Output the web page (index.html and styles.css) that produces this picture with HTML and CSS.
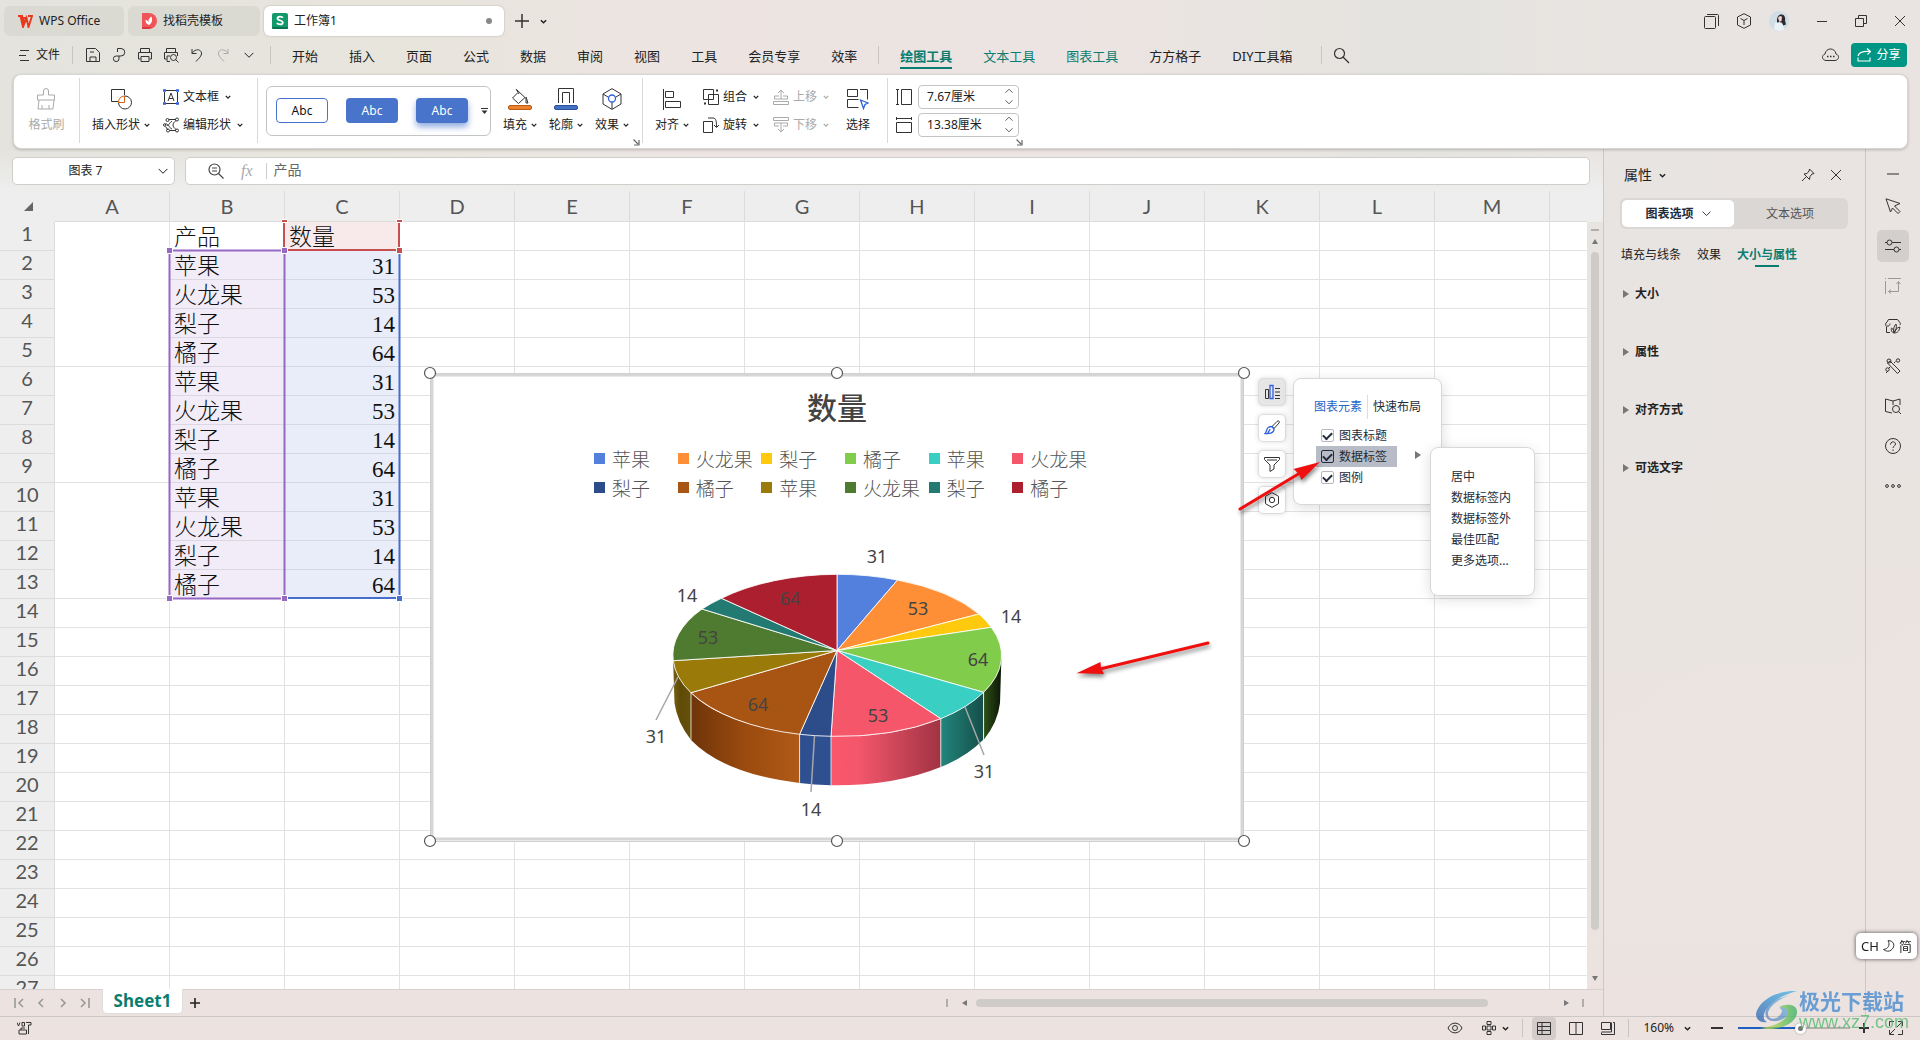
FILE: index.html
```html
<!DOCTYPE html>
<html lang="zh-CN">
<head>
<meta charset="utf-8">
<title>工作簿1 - WPS Office</title>
<link rel="stylesheet" href="styles.css">
</head>
<body>
<svg class="defs" aria-hidden="true">
  <symbol id="caret" viewBox="0 0 8 8"><path d="M1 2.500 4 5.500 7 2.500" fill="none" stroke="currentColor" stroke-width="1.700"/></symbol>
  <symbol id="caret-thin" viewBox="0 0 8 8"><path d="M.5 2.300 4 5.800 7.500 2.300" fill="none" stroke="currentColor" stroke-width=".8"/></symbol>
  <symbol id="tri-right" viewBox="0 0 6 8"><path d="M0 0 6 4 0 8z" fill="currentColor"/></symbol>
  <symbol id="launch" viewBox="0 0 7 7"><path d="M.5 .5 5 5M6 1v5H1" fill="none" stroke="currentColor" stroke-width="1.2"/></symbol>
</svg>

<header class="titlebar">
  <div class="doc-tabs">
    <button class="doc-tab home"><svg width="16" height="13" viewBox="0 0 16 13"><path d="M1 1h4l2 7 2-5H6.500M5 1l-1.500 0 2.500 11 3.500-9 2 9L15 1h-4" fill="none" stroke="#e8391f" stroke-width="1.900"/></svg>WPS Office</button>
    <button class="doc-tab docer"><svg width="16" height="16" viewBox="0 0 16 16"><path d="M1 0h7a8 8 0 0 1 0 16H1z" fill="#f0555a"/><path d="M1 14h10l-3 2H1z" fill="#d83a40"/><path d="M8 12C5 11 4.500 9 4.500 7c2 0 3 1.500 3 3C7 7 8 5 10.500 3.500 11.500 7 11.500 10 8 12z" fill="#fff"/></svg>找稻壳模板</button>
    <button class="doc-tab active"><svg width="16" height="16" viewBox="0 0 16 16"><rect width="16" height="16" rx="2" fill="#11996b"/><path d="M0 14h16v1a1 1 0 0 1-1 1H1a1 1 0 0 1-1-1z" fill="#0b7350"/><path d="M10.800 4.700C10 3.300 5.500 3 5.500 5.500c0 2.500 5.300 1.500 5.300 4 0 2.700-5 2.300-5.800.4" fill="none" stroke="#fff" stroke-width="1.800"/></svg>工作簿1<i class="dot"></i></button>
    <button class="plain" aria-label="新建"><svg width="14" height="14" viewBox="0 0 14 14"><path d="M7 0v14M0 7h14" stroke="#333" stroke-width="1.500"/></svg></button>
    <button class="plain" aria-label="标签列表"><svg width="7" height="7"><use href="#caret"/></svg></button>
  </div>
  <div class="window-tools">
    <button class="plain"><svg width="15" height="15" viewBox="0 0 15 15" fill="none" stroke="#333"><rect x=".5" y="2.500" width="11" height="12" rx="1"/><path d="M3 .5h10.500a1 1 0 0 1 1 1V12"/></svg></button>
    <button class="plain"><svg width="16" height="16" viewBox="0 0 16 16" fill="none" stroke="#333"><path d="M8 .7 14.500 4v8L8 15.300 1.500 12V4zM4.500 5.500 8 7.500l3.500-2M8 7.500V12"/></svg></button>
    <button class="plain"><svg width="20" height="20" viewBox="0 0 20 20"><circle cx="10" cy="10" r="10" fill="#cfdde4"/><path d="M8 8c1-4 3-5 5-4.500 3 .5 3.500 4 3 6l1 4-3 1-1-3-4 1-1-1z" fill="#2c2730"/><path d="M9 7c1-2 3-3 4-1l-.5 4-2 1z" fill="#f1d3c9"/><path d="M6 12l5-1 3 3 1 5a10 10 0 0 1-10-1z" fill="#e9f2f7"/></svg></button>
    <button class="plain win"><svg width="12" height="12" viewBox="0 0 12 12"><path d="M1 6.500h10" stroke="#333"/></svg></button>
    <button class="plain win"><svg width="12" height="12" viewBox="0 0 12 12" fill="none" stroke="#333"><path d="M.5 3.500h8v8h-8zM3.500 3.500v-3h8v8h-3"/></svg></button>
    <button class="plain win"><svg width="12" height="12" viewBox="0 0 12 12"><path d="M1 1l10 10M11 1 1 11" stroke="#333"/></svg></button>
  </div>
</header>

<nav class="menubar">
  <button class="plain file"><svg width="10" height="12" viewBox="0 0 10 12"><path d="M1 1.500h9M0 6.500h7M1 11.500h9" stroke="#333"/></svg>文件</button>
  <i class="sep"></i>
  <div class="quick">
    <button class="plain"><svg width="16" height="16" viewBox="0 0 16 16" fill="none" stroke="#333"><path d="M1.500 1.500h9l4 4v9h-13zM5 14.500V10h6v4.500M5 5h4"/></svg></button>
    <button class="plain"><svg width="16" height="16" viewBox="0 0 16 16" fill="none" stroke="#333"><path d="M6.500 5V1.500h3.500a3.500 3.500 0 0 1 0 7.500H5.500a2.800 2.800 0 1 0 2.500 2.800V9"/></svg></button>
    <button class="plain"><svg width="16" height="16" viewBox="0 0 16 16" fill="none" stroke="#333"><path d="M3.500 5V1.500h9V5M3.500 12h-2V5.500h13V12h-2M4 9.500h8v5H4z"/></svg></button>
    <button class="plain"><svg width="16" height="16" viewBox="0 0 16 16" fill="none" stroke="#333"><path d="M3.500 5V1.500h9V5M3.500 12h-2V5.500h13V9M7 14.500H4V9h3"/><circle cx="10.500" cy="10.500" r="3"/><path d="M12.500 12.500l3 3"/></svg></button>
    <button class="plain"><svg width="16" height="16" viewBox="0 0 16 16" fill="none" stroke="#333"><path d="M3 2v4.500h4.500M3 6.500C6 1 13 2 12.500 7 12 10 9 12 7 14.500"/></svg></button>
    <button class="plain"><svg width="16" height="16" viewBox="0 0 16 16" fill="none" stroke="#aaa"><path d="M13 2v4.500H8.500M13 6.500C10 1 3 2 3.500 7 4 10 7 12 9 14.500"/></svg></button>
    <button class="plain"><svg width="10" height="10"><use href="#caret-thin"/></svg></button>
  </div>
  <i class="sep"></i>
  <div class="menus">
    <a href="#">开始</a><a href="#">插入</a><a href="#">页面</a><a href="#">公式</a><a href="#">数据</a><a href="#">审阅</a><a href="#">视图</a><a href="#">工具</a><a href="#">会员专享</a><a href="#">效率</a>
  </div>
  <i class="sep"></i>
  <div class="menus">
    <a href="#" class="current">绘图工具</a><a href="#" class="context">文本工具</a><a href="#" class="context">图表工具</a><a href="#">方方格子</a><a href="#">DIY工具箱</a>
  </div>
  <i class="sep last"></i>
  <button class="plain"><svg width="17" height="17" viewBox="0 0 17 17" fill="none" stroke="#333" stroke-width="1.200"><circle cx="6.500" cy="6.500" r="5"/><path d="M10 10l6 6"/></svg></button>
  <button class="plain cloud"><svg width="17" height="14" viewBox="0 0 17 14" fill="none" stroke="#333"><path d="M4 12.500C-.5 12-.5 7 3 6 4-.7 13-.7 14 6c3.500 1 3.500 6-1 6.500z"/><path d="M5 8.500h1.500M8 8.500h1.500M11 8.500h1.500" stroke-width="1.500"/></svg></button>
  <button class="share"><svg width="15" height="14" viewBox="0 0 15 14" fill="none" stroke="#fff" stroke-width="1.100"><path d="M1 8C2 4 6 3 13 3.500M10 .5l3.500 3-3 3M1 9.500v3.500h12V9.500"/></svg>分享</button>
</nav>

<section class="ribbon">
  <div class="group g-format">
    <button class="big off"><svg width="20" height="22" viewBox="0 0 20 22" fill="none" stroke="#aaa"><path d="M7.500 7V3a2.500 2.500 0 0 1 5 0v4h6v5h-17V7zM3 12l-1 9h15l1-9M6 21v-4M13 21v-4"/></svg><span>格式刷</span></button>
  </div>
  <div class="group g-insert">
    <button class="big"><svg width="22" height="22" viewBox="0 0 22 22" fill="none" stroke="#333"><path d="M8 13.500H1.500v-12h13V7"/><path d="M14.500 8a6.500 6.500 0 1 1-6 6.500"/><path d="M8.500 14.500a6 6 0 0 1 6-6.500v6.500z" stroke="#d2601a"/></svg><span>插入形状<svg width="6" height="6"><use href="#caret"/></svg></span></button>
    <div class="stack">
      <button class="small"><svg width="16" height="16" viewBox="0 0 16 16" fill="none" stroke="#333"><path d="M1.500 3v10M14.500 3v10M3 1.500h10M3 14.500h10M5 12l3-8 3 8M6 9.500h4"/><path d="M0 1.500h3M13 1.500h3M0 14.500h3M13 14.500h3" stroke="#2f5fe0" stroke-width="2.500"/></svg>文本框<svg width="6" height="6"><use href="#caret"/></svg></button>
      <button class="small"><svg width="16" height="16" viewBox="0 0 16 16" fill="none" stroke="#333"><path d="M6 2.500h7M3.500 6.500 2 7.500M2.500 9.500 5 13M6.500 13.500H13M13 3.500c-4 3-4 6 0 9M9 4C5 7 7 8 4 8c3 0 1 2 5 4"/><circle cx="4.500" cy="3" r="1.500"/><circle cx="14" cy="2.500" r="1.500"/><circle cx="1.800" cy="8" r="1.300"/><circle cx="5" cy="13.500" r="1.500"/><circle cx="14" cy="13.500" r="1.500"/></svg>编辑形状<svg width="6" height="6"><use href="#caret"/></svg></button>
    </div>
  </div>
  <div class="group g-style">
    <div class="gallery">
      <button class="swatch outline">Abc</button><button class="swatch">Abc</button><button class="swatch shadow">Abc</button>
      <button class="plain more"><svg width="7" height="6" viewBox="0 0 7 6"><path d="M0 .5h7" stroke="#333"/><path d="M.5 2.500h6L3.500 6z" fill="#333"/></svg></button>
    </div>
    <button class="big"><svg width="24" height="22" viewBox="0 0 24 22"><path d="M9 2 17 9.500 10.500 15.500 4.500 10 9.500 5M8 1l3 5M18 9l2 6h-2z" fill="none" stroke="#333"/><rect x=".5" y="17.500" width="23" height="4" rx="1.500" fill="#ee8130" stroke="#b85c15"/></svg><span>填充<svg width="6" height="6"><use href="#caret"/></svg></span></button>
    <button class="big"><svg width="24" height="22" viewBox="0 0 24 22"><path d="M4.500 15V.5h15V15M8.500 15V4.500h7V15" fill="none" stroke="#333"/><rect x=".5" y="17.500" width="23" height="4" rx="1.500" fill="#4472c4" stroke="#2c519b"/></svg><span>轮廓<svg width="6" height="6"><use href="#caret"/></svg></span></button>
    <button class="big"><svg width="20" height="22" viewBox="0 0 20 22" fill="none" stroke="#333"><path d="M10 .6 19 6v10l-9 5.400L1 16V6zM1 6l5 3M19 6l-5 3M10 14v7"/><circle cx="10" cy="10.500" r="3.500" stroke="#2f5fe0" stroke-width="1.300"/></svg><span>效果<svg width="6" height="6"><use href="#caret"/></svg></span></button>
    <svg class="launcher" width="7" height="7"><use href="#launch"/></svg>
  </div>
  <div class="group g-arrange">
    <button class="big"><svg width="20" height="22" viewBox="0 0 20 22" fill="none" stroke="#333"><path d="M1.500 1v21M3.500 3.500h8v6h-8zM3.500 13.500h15v6h-15z"/></svg><span>对齐<svg width="6" height="6"><use href="#caret"/></svg></span></button>
    <div class="stack">
      <button class="small"><svg width="16" height="16" viewBox="0 0 16 16" fill="none" stroke="#333"><path d="M.5.500h10v10H.5zM5.500 5.500h10v10h-10z"/><path d="M13 1.500h2M1 14.500h2" stroke-width="2"/></svg>组合<svg width="6" height="6"><use href="#caret"/></svg></button>
      <button class="small"><svg width="16" height="16" viewBox="0 0 16 16" fill="none" stroke="#333"><path d="M.5 4.500h9v11h-9zM5 1h5c3 0 3.500 3 3.500 9M11 8l2.500 2.500L16 8"/></svg>旋转<svg width="6" height="6"><use href="#caret"/></svg></button>
    </div>
    <div class="stack">
      <button class="small off"><svg width="16" height="16" viewBox="0 0 16 16" fill="none" stroke="#aaa"><path d="M.5 12.500h15v3H.5zM6 10H1.500V7H6M10 10h4.500V7H10M8 10V1M5 4l3-3 3 3M6 10h4"/></svg>上移<svg width="6" height="6"><use href="#caret"/></svg></button>
      <button class="small off"><svg width="16" height="16" viewBox="0 0 16 16" fill="none" stroke="#aaa"><path d="M.5.500h15v3H.5zM6 6H1.500v3H6M10 6h4.500v3H10M8 6v9M5 12l3 3 3-3M6 6h4"/></svg>下移<svg width="6" height="6"><use href="#caret"/></svg></button>
    </div>
    <button class="big pick"><svg width="22" height="22" viewBox="0 0 22 22" fill="none" stroke="#333"><path d="M.5 8.500v-7h10v7zM13 1.500h7.500v10M.5 11.500h11M.5 11.500v8h11"/><path d="M13.500 12 21 15l-3 1.500-1.500 4z" stroke="#2f5fe0" stroke-width="1.300"/></svg><span>选择</span></button>
  </div>
  <div class="group g-size">
    <div class="stack sizes">
      <label><svg width="16" height="16" viewBox="0 0 16 16" fill="none" stroke="#333"><path d="M0 .5h3M0 15.500h3M1.500.500v15M5.500.500h10v15h-10z"/></svg><span class="spin"><input value="7.67厘米" aria-label="高度"><span class="arrows"><svg class="up" width="8" height="8"><use href="#caret-thin"/></svg><svg width="8" height="8"><use href="#caret-thin"/></svg></span></span></label>
      <label><svg width="16" height="16" viewBox="0 0 16 16" fill="none" stroke="#333"><path d="M.5 0v3M15.500 0v3M.5 1.500h15M.5 5.500h15v10H.5z"/></svg><span class="spin"><input value="13.38厘米" aria-label="宽度"><span class="arrows"><svg class="up" width="8" height="8"><use href="#caret-thin"/></svg><svg width="8" height="8"><use href="#caret-thin"/></svg></span></span></label>
    </div>
    <svg class="launcher" width="7" height="7"><use href="#launch"/></svg>
  </div>
</section>

<main class="workspace">
  <section class="book">
    <div class="formula-row">
      <button class="namebox"><span>图表 7</span><svg width="10" height="10"><use href="#caret-thin"/></svg></button>
      <div class="formula">
        <svg width="16" height="16" viewBox="0 0 16 16" fill="none" stroke="#444" stroke-width="1.200"><circle cx="6.500" cy="6.500" r="5.500"/><path d="M10.500 10.500l5 5M4 5h5M4 8h5"/></svg>
        <span class="fx">fx</span><i></i>
        <input value="产品" aria-label="编辑栏">
      </div>
    </div>
    <div class="sheet">
      <div class="grid">
        <table>
          <colgroup><col class="c-head"><col><col><col><col><col><col><col><col><col><col><col><col><col><col></colgroup>
          <thead><tr><th class="corner"><svg width="9" height="9" viewBox="0 0 9 9"><path d="M9 0v9H0z" fill="#666"/></svg></th><th>A</th><th>B</th><th>C</th><th>D</th><th>E</th><th>F</th><th>G</th><th>H</th><th>I</th><th>J</th><th>K</th><th>L</th><th>M</th><th></th></tr></thead>
          <tbody>
            <tr><th>1<td rowspan="5"><td>产品<td class="series">数量<td><td><td><td><td><td><td><td><td><td><td></tr>
            <tr><th>2<td class="cat">苹果<td class="val">31<td><td><td><td><td><td><td><td><td><td><td></tr>
            <tr><th>3<td class="cat">火龙果<td class="val">53<td><td><td><td><td><td><td><td><td><td><td></tr>
            <tr><th>4<td class="cat">梨子<td class="val">14<td><td><td><td><td><td><td><td><td><td><td></tr>
            <tr><th>5<td class="cat">橘子<td class="val">64<td><td><td><td><td><td><td><td><td><td><td></tr>
            <tr><th>6<td rowspan="4"><td class="cat">苹果<td class="val">31<td><td><td><td><td><td><td><td><td><td><td></tr>
            <tr><th>7<td class="cat">火龙果<td class="val">53<td><td><td><td><td><td><td><td><td><td><td></tr>
            <tr><th>8<td class="cat">梨子<td class="val">14<td><td><td><td><td><td><td><td><td><td><td></tr>
            <tr><th>9<td class="cat">橘子<td class="val">64<td><td><td><td><td><td><td><td><td><td><td></tr>
            <tr><th>10<td rowspan="4"><td class="cat">苹果<td class="val">31<td><td><td><td><td><td><td><td><td><td><td></tr>
            <tr><th>11<td class="cat">火龙果<td class="val">53<td><td><td><td><td><td><td><td><td><td><td></tr>
            <tr><th>12<td class="cat">梨子<td class="val">14<td><td><td><td><td><td><td><td><td><td><td></tr>
            <tr><th>13<td class="cat">橘子<td class="val">64<td><td><td><td><td><td><td><td><td><td><td></tr>
            <tr><th>14<td><td><td><td><td><td><td><td><td><td><td><td><td><td></tr>
            <tr><th>15<td><td><td><td><td><td><td><td><td><td><td><td><td><td></tr>
            <tr><th>16<td><td><td><td><td><td><td><td><td><td><td><td><td><td></tr>
            <tr><th>17<td><td><td><td><td><td><td><td><td><td><td><td><td><td></tr>
            <tr><th>18<td><td><td><td><td><td><td><td><td><td><td><td><td><td></tr>
            <tr><th>19<td><td><td><td><td><td><td><td><td><td><td><td><td><td></tr>
            <tr><th>20<td><td><td><td><td><td><td><td><td><td><td><td><td><td></tr>
            <tr><th>21<td><td><td><td><td><td><td><td><td><td><td><td><td><td></tr>
            <tr><th>22<td><td><td><td><td><td><td><td><td><td><td><td><td><td></tr>
            <tr><th>23<td><td><td><td><td><td><td><td><td><td><td><td><td><td></tr>
            <tr><th>24<td><td><td><td><td><td><td><td><td><td><td><td><td><td></tr>
            <tr><th>25<td><td><td><td><td><td><td><td><td><td><td><td><td><td></tr>
            <tr><th>26<td><td><td><td><td><td><td><td><td><td><td><td><td><td></tr>
            <tr><th>27<td><td><td><td><td><td><td><td><td><td><td><td><td><td></tr>
          </tbody>
        </table>

        <svg class="ranges" width="240" height="390" viewBox="165 216 240 390" fill="none" stroke-width="2">
          <path d="M284 222v28h115v-28" stroke="#c5504f"/>
          <path d="M399.500 250v348H284" stroke="#456fcf"/>
          <path d="M169.500 250.500h115v348h-115z" stroke="#9668c4"/>
          <g stroke="#fff" stroke-width="1">
            <path d="M281.500 219.500h6v3h-6zM396.500 219.500h6v3h-6zM396.500 247.500h6v6h-6z" fill="#c5504f"/>
            <path d="M396.500 595.500h6v6h-6z" fill="#456fcf"/>
            <path d="M166.500 247.500h6v6h-6zM281.500 247.500h6v6h-6zM166.500 595.500h6v6h-6zM281.500 595.500h6v6h-6z" fill="#9668c4"/>
          </g>
        </svg>

        <figure class="chart">
          <figcaption>数量</figcaption>
          <ul class="legend">
            <li class="k1">苹果<li class="k2">火龙果<li class="k3">梨子<li class="k4">橘子<li class="k5">苹果<li class="k6">火龙果
            <li class="k7">梨子<li class="k8">橘子<li class="k9">苹果<li class="k10">火龙果<li class="k11">梨子<li class="k12">橘子
          </ul>
          <svg class="plot" viewBox="422 365 830 484" width="830" height="484">
            <defs>
              <linearGradient id="s4"><stop offset="0" stop-color="#2f5218"/><stop offset="1" stop-color="#0c1606"/></linearGradient>
              <linearGradient id="s5"><stop offset="0" stop-color="#22867d"/><stop offset="1" stop-color="#154f4a"/></linearGradient>
              <linearGradient id="s6"><stop offset="0" stop-color="#f9576c"/><stop offset=".25" stop-color="#f4566b"/><stop offset="1" stop-color="#a03343"/></linearGradient>
              <linearGradient id="s8"><stop offset="0" stop-color="#6f340a"/><stop offset=".5" stop-color="#9b4b0e"/><stop offset="1" stop-color="#b05a18"/></linearGradient>
              <linearGradient id="s9"><stop offset="0" stop-color="#7a6212"/><stop offset=".4" stop-color="#5f4b08"/><stop offset="1" stop-color="#66510a"/></linearGradient>
            </defs>
            <g fill="none">
              <path d="M432 375h810v464H432z" stroke="#d6d6d6" stroke-width="3"/>
              <path d="M430.500 373.500h813v468h-813z" stroke="#d0d0d0"/>
            </g>
            <path d="M673 658 674.500 703Q677 722 691 740V693Q676 676 673 658z" fill="url(#s9)"/>
            <path d="M691 693V740Q724 774 799.600 783V734Q722 724 691 693z" fill="url(#s8)"/>
            <path d="M799.600 734V783Q814 785 831 785.300V736z" fill="#2f5090"/>
            <path d="M831 736V785.300Q894 786 940.800 767V718.700Q894 738 831 736z" fill="url(#s6)"/>
            <path d="M940.800 718.700V767Q966 757 983 740V692.300Q966 709 940.800 718.700z" fill="url(#s5)"/>
            <path d="M983.600 692.300V740Q998 722 1000 703L1001.500 655Q1000 676 983.600 692.300z" fill="url(#s4)"/>
            <path d="M691 693v47M799.600 734v49M831 736v49M940.800 719v48M983.600 692v48" stroke="#ffffffc0" fill="none"/>
            <g stroke="#fff" stroke-opacity=".85" stroke-linejoin="round">
              <path d="M837 650.500V574.300A164.500 81 0 0 1 897.500 580z" fill="#5380dc"/>
              <path d="M837 650.500 897.500 580A164.500 81 0 0 1 979 614z" fill="#ff8f37"/>
              <path d="M837 650.500 979 614A164.500 81 0 0 1 991.300 627.300z" fill="#ffc90d"/>
              <path d="M837 650.500 991.300 627.300A164.500 81 0 0 1 983.600 692.300z" fill="#82cc4b"/>
              <path d="M837 650.500 983.600 692.300A164.500 81 0 0 1 940.800 718.700z" fill="#39cfc2"/>
              <path d="M837 650.500 940.800 718.700A164.500 81 0 0 1 831 736.300z" fill="#f5566a"/>
              <path d="M837 650.500 831 736.300A164.500 81 0 0 1 799.600 734.300z" fill="#2c4c8a"/>
              <path d="M837 650.500 799.600 734.300A164.500 81 0 0 1 690.900 692.700z" fill="#a85513"/>
              <path d="M837 650.500 690.900 692.700A164.500 81 0 0 1 673.300 660.700z" fill="#9a7a08"/>
              <path d="M837 650.500 673.300 660.700A164.500 81 0 0 1 702 609z" fill="#4f7b30"/>
              <path d="M837 650.500 702 609A164.500 81 0 0 1 721.500 598.300z" fill="#237a72"/>
              <path d="M837 650.500 721.500 598.300A164.500 81 0 0 1 837 574.300z" fill="#ab1f2e"/>
            </g>
            <path d="M678 677 656 720M814.500 736 811 792M965 707 984 755" stroke="#a6a6a6" stroke-width="1.500"/>
            <g class="labels">
              <text x="877" y="563">31</text><text x="918" y="615">53</text><text x="1011" y="623">14</text><text x="978" y="666">64</text>
              <text x="984" y="778">31</text><text x="878" y="722">53</text><text x="811" y="816">14</text><text x="758" y="711">64</text>
              <text x="656" y="743">31</text><text x="708" y="644">53</text><text x="687" y="602">14</text><text x="790" y="605">64</text>
            </g>
            <g fill="#fff" stroke="#555" stroke-width="1.200">
              <circle cx="430" cy="373" r="5.500"/><circle cx="837" cy="373" r="5.500"/><circle cx="1244" cy="373" r="5.500"/>
              <circle cx="430" cy="841" r="5.500"/><circle cx="837" cy="841" r="5.500"/><circle cx="1244" cy="841" r="5.500"/>
            </g>
          </svg>
        </figure>

        <div class="chart-tools">
          <button class="on"><svg width="16" height="16" viewBox="0 0 16 16" fill="none" stroke="#333"><path d="M1.500 5.500h3v9h-3zM11 4.500h5M11 8h5M11 11.500h5M11 14.500h5"/><path d="M6 1.500h3v13H6z" stroke="#2f5fe0" stroke-width="1.300"/></svg></button>
          <button><svg width="16" height="16" viewBox="0 0 16 16" fill="none" stroke="#333"><path d="M8 6.500 13 1.500c2-1.500 3 .5 2 1.500l-5 5.500z"/><path d="M8 6.500 10 9c0 4-4 5-9 4.500C3 12 2 8 5 7zM4 13c0-2 2-2 2-4" stroke="#2f5fe0" stroke-width="1.300"/></svg></button>
          <button><svg width="16" height="16" viewBox="0 0 16 16" fill="none" stroke="#333"><path d="M.5 1.500h15v2L10 9v4l-4 2.500V9L.5 3.500zM3 4h10"/></svg></button>
          <button><svg width="16" height="16" viewBox="0 0 16 16" fill="none" stroke="#333"><path d="M8 .6 14.500 4.300v7.400L8 15.400 1.500 11.700V4.300z"/><circle cx="8" cy="8" r="2.700"/></svg></button>
        </div>

        <div class="popup elements">
          <div class="popup-tabs"><button class="plain sel">图表元素</button><button class="plain">快速布局</button></div>
          <label><input type="checkbox" checked>图表标题</label>
          <label class="hover"><input type="checkbox" checked>数据标签</label>
          <label><input type="checkbox" checked>图例</label>
          <svg class="flyout" width="6" height="8"><use href="#tri-right"/></svg>
        </div>
        <div class="popup positions">
          <button>居中</button><button>数据标签内</button><button>数据标签外</button><button>最佳匹配</button><button>更多选项...</button>
        </div>

        <svg class="pointers" width="260" height="240" viewBox="1070 450 260 240">
          <path d="M1240 509 1300 473" stroke="#f00f0f" stroke-width="3" stroke-linecap="round"/><path d="M1320 462 1293.500 469 1299 474 1301.500 480z" fill="#f00f0f"/>
          <path d="M1208 643 1100 669" stroke="#f00f0f" stroke-width="3" stroke-linecap="round"/><path d="M1076.500 673.300 1100.500 662 1101 668 1104 674z" fill="#f00f0f"/>
        </svg>
      </div>
      <div class="vscroll"><i class="split"></i><i class="tri up"></i><i class="thumb"></i><i class="tri down"></i></div>
    </div>
    <div class="sheet-tabs">
      <div class="tab-nav">
        <button class="plain"><svg width="10" height="10" viewBox="0 0 10 10"><path d="M1 0v10M9 1 5 5l4 4"/></svg></button>
        <button class="plain"><svg width="10" height="10" viewBox="0 0 10 10"><path d="M7 1 3 5l4 4"/></svg></button>
        <button class="plain"><svg width="10" height="10" viewBox="0 0 10 10"><path d="M3 1l4 4-4 4"/></svg></button>
        <button class="plain"><svg width="10" height="10" viewBox="0 0 10 10"><path d="M9 0v10M1 1l4 4-4 4"/></svg></button>
      </div>
      <button class="sheet-tab">Sheet1</button>
      <button class="plain add"><svg width="10" height="10" viewBox="0 0 10 10"><path d="M5 0v10M0 5h10" stroke="#222" stroke-width="1.600"/></svg></button>
      <div class="hscroll"><i class="split"></i><i class="tri left"></i><i class="track"><i class="thumb"></i></i><i class="tri right"></i><i class="split"></i></div>
    </div>
  </section>

  <aside class="panel">
    <div class="panel-head"><span>属性</span><svg width="7" height="7"><use href="#caret"/></svg>
      <button class="plain pin"><svg width="14" height="14" viewBox="0 0 14 14" fill="none" stroke="#333"><path d="M8.500 1 13 5.500l-2 .5-2 2.500-.5 3L3 6l3-.5L8 3zM5.500 8.500 1 13"/></svg></button>
      <button class="plain"><svg width="12" height="12" viewBox="0 0 12 12"><path d="M1 1l10 10M11 1 1 11" stroke="#333"/></svg></button>
    </div>
    <div class="segments"><button class="sel">图表选项<svg width="9" height="9"><use href="#caret-thin"/></svg></button><button>文本选项</button></div>
    <div class="panel-tabs"><a href="#">填充与线条</a><a href="#">效果</a><a href="#" class="sel">大小与属性</a></div>
    <div class="sections">
      <button><svg width="6" height="8"><use href="#tri-right"/></svg>大小</button>
      <button><svg width="6" height="8"><use href="#tri-right"/></svg>属性</button>
      <button><svg width="6" height="8"><use href="#tri-right"/></svg>对齐方式</button>
      <button><svg width="6" height="8"><use href="#tri-right"/></svg>可选文字</button>
    </div>
  </aside>

  <nav class="sidebar">
    <button class="short"><svg width="16" height="16" viewBox="0 0 16 16"><path d="M2 8h12" stroke="#888" stroke-width="2"/></svg></button>
    <button><svg width="16" height="16" viewBox="0 0 16 16" fill="none" stroke="#333"><path d="M1 .8 15 5.500 9.500 8l5.500 5.500-2 2L7.500 10 5.500 14z"/></svg></button>
    <button class="on"><svg width="16" height="16" viewBox="0 0 16 16" fill="none" stroke="#333"><circle cx="4.500" cy="4.500" r="2.500"/><circle cx="11.500" cy="11.500" r="2.500"/><path d="M0 4.500h2M7 4.500h9M0 11.500h9M14 11.500h2"/></svg></button>
    <button><svg width="16" height="16" viewBox="0 0 16 16" fill="none" stroke="#999"><path d="M0 .500h1M3 .500h13M.5 3v13M13.500 4v9.500H4M11.500 6l2-2.500 2 2.500M6 11.500l-2.500 2 2.500 2"/></svg></button>
    <button><svg width="16" height="16" viewBox="0 0 16 16" fill="none" stroke="#333"><path d="M5 14.500H1.500v-6C0 7 .5 5 2 4l1.500-2.500h9L14.500 4c1 1 1 2 .5 3M2 8c2 .5 3-1 3-2.500"/><path d="M9 15C6 14 6 11.500 6.500 10 8.500 11 9 13 9 15c-1-4 0-7 2-9 1 3 0 7-2 9 2 0 5-.5 6-6-3 .5-5 3-6 6z"/></svg></button>
    <button><svg width="16" height="16" viewBox="0 0 16 16" fill="none" stroke="#333"><path d="M5 3 15 13l-2.500 2.500L2.500 5z"/><circle cx="4" cy="3" r="2"/><circle cx="13" cy="2.500" r="1.700"/><circle cx="2.500" cy="11.500" r="1.700"/><path d="M9 5l1.500-1.500M5 9l-1.500 1.500M1 15l2-2"/></svg></button>
    <button><svg width="16" height="16" viewBox="0 0 16 16" fill="none" stroke="#333"><path d="M8 3 .5 1v12.500L7 15M8 3l7-2v6M8 3v4"/><circle cx="11" cy="11" r="3.500"/><path d="M13.500 13.500 16 16"/></svg></button>
    <button><svg width="16" height="16" viewBox="0 0 16 16" fill="none" stroke="#333"><circle cx="8" cy="8" r="7.500"/><path d="M5.500 6.500C5.500 3 10.500 3 10.500 6c0 2-2.500 2-2.500 4M8 11.500V13"/></svg></button>
    <button><svg width="16" height="16" viewBox="0 0 16 16" fill="none" stroke="#333"><circle cx="2" cy="8" r="1.400"/><circle cx="8" cy="8" r="1.400"/><circle cx="14" cy="8" r="1.400"/></svg></button>
  </nav>
</main>

<footer class="status">
  <svg width="15" height="13" viewBox="0 0 15 13" fill="none" stroke="#333"><path d="M0 .5 1.500 4 3 .5M5 .5v3.500h2.500V.500zM9 .5h5v2.500h-2.500V12M2 8h7.500v4H2zM4 8V6h4"/></svg>
  <div class="status-tools">
    <button class="plain eye"><svg width="16" height="12" viewBox="0 0 16 12" fill="none" stroke="#333"><path d="M1 6C4-.5 12-.5 15 6 12 12.500 4 12.500 1 6z"/><circle cx="8" cy="6" r="2.500"/></svg></button>
    <button class="plain cross"><svg width="14" height="14" viewBox="0 0 14 14" fill="none" stroke="#333"><path d="M5 .500h4v3H5zM5 10.500h4v3H5zM.5 5h3v4h-3zM10.500 5h3v4h-3zM5 5h4v4H5z"/></svg><svg width="7" height="7"><use href="#caret"/></svg></button>
    <i class="sep"></i>
    <button class="view on"><svg width="14" height="13" viewBox="0 0 14 13" fill="none" stroke="#333"><path d="M.5.500h13v12H.5zM.5 4.500h13M.5 8.500h13M5 .5v12"/></svg></button>
    <button class="view"><svg width="14" height="13" viewBox="0 0 14 13" fill="none" stroke="#333"><path d="M.5.500h13v12H.5zM7 .5v12"/></svg></button>
    <button class="view"><svg width="14" height="13" viewBox="0 0 14 13" fill="none" stroke="#333"><path d="M.5.500h9v7h-9zM12 .5h1.500v12H.5V10.500M.5 10h10V.500"/></svg></button>
    <i class="sep"></i>
    <button class="plain zoom">160%<svg width="7" height="7"><use href="#caret"/></svg></button>
    <button class="plain"><svg width="12" height="12" viewBox="0 0 12 12"><path d="M0 6h12" stroke="#333" stroke-width="2"/></svg></button>
    <input type="range" class="zoom-range" min="0" max="100" value="56" aria-label="缩放">
    <button class="plain"><svg width="10" height="10" viewBox="0 0 10 10"><path d="M5 0v10M0 5h10" stroke="#333" stroke-width="2"/></svg></button>
    <button class="plain full"><svg width="14" height="14" viewBox="0 0 14 14" fill="none" stroke="#333"><path d="M.5 5V.500H5M9 .5h4.500V5M13.500 9v4.500H9M5 13.500H.5V9M8 6l5-5M6 8l-5 5"/></svg></button>
  </div>
</footer>

<div class="ime"><span>CH</span><svg width="12" height="12" viewBox="0 0 12 12" fill="none" stroke="#333"><path d="M5 .7c6-.5 8 6 3 9.500-2 1.500-5 1.300-7.500-.7C5 9 7.500 5 5 .7z"/></svg><span>简</span></div>

<div class="brand">
  <svg width="44" height="42" viewBox="0 0 44 42">
    <defs><linearGradient id="b1" x1="0" y1="1" x2="1" y2="0"><stop offset="0" stop-color="#2b5fb0"/><stop offset="1" stop-color="#49b9ea"/></linearGradient><linearGradient id="b2"><stop offset="0" stop-color="#e5e340"/><stop offset="1" stop-color="#2fae62"/></linearGradient></defs>
    <path d="M42 1C22 0 4 10 1 24c0 6 5 9 11 8C4 28 10 10 42 1z" fill="url(#b1)"/>
    <path d="M39 4C24 8 13 17 13 24c0 5 6 6 10 3 4-3 6-8 1-9 6-3 12-3 11 3-1 6-9 11-18 10C8 29 7 17 22 9z" fill="url(#b1)" opacity=".75"/>
    <path d="M24 17c8-4 18-3 18 5C42 34 22 42 5 38c14-1 27-8 28-15 0-4-4-6-9-6z" fill="url(#b2)"/>
  </svg>
  <div><b>极光下载站</b><span>www.xz7.com</span></div>
</div>
</body>
</html>
```

FILE: styles.css
```css
* { box-sizing: border-box; }

body {
  margin: 0;
  height: 100vh;
  display: flex;
  flex-direction: column;
  overflow: hidden;
  font: 12px/16px "Noto Sans", "Noto Sans CJK SC", sans-serif;
  color: #222;
  background:
    linear-gradient(180deg, #ece3e000 40%, #ece3e0 95%),
    linear-gradient(90deg, #e4e3dd 0, #e7e5dc 20%, #ede4e2 38%, #ece4e2 56%, #e4e3df 74%, #e8e4e1 84%, #e9e4e1 100%);
}

svg { display: block; flex: none; }
.defs { display: none; }
button, input { font: inherit; color: inherit; }
button { border: 0; background: none; padding: 0; display: flex; align-items: center; white-space: nowrap; }
a { color: inherit; text-decoration: none; }
i { display: block; }

/* title bar */
.titlebar { height: 40px; display: flex; justify-content: space-between; padding: 6px 14px 4px 4px; }
.doc-tabs { display: flex; align-items: center; gap: 4px; }
.doc-tab { height: 30px; border-radius: 6px; background: #dadad2; gap: 6px; padding: 0 13px; }
.doc-tab.home { width: 120px; }
.doc-tab.docer { width: 132px; }
.doc-tab.active { width: 240px; background: #fff; padding: 0 12px 0 8px; box-shadow: 0 0 2px #0004; }
.dot { width: 6px; height: 6px; border-radius: 50%; background: #888; margin-left: auto; }
.doc-tabs .plain { margin-left: 7px; }
.window-tools { display: flex; align-items: center; gap: 17px; }
.window-tools .win { margin-left: 10px; }

/* menu bar */
.menubar { height: 30px; display: flex; align-items: center; padding: 0 13px 0 19px; }
.sep { width: 1px; height: 18px; background: #c8c5c1; }
.file { gap: 7px; margin-right: 12px; }
.quick { display: flex; gap: 10px; padding: 0 13px 0 12px; }
.quick .plain:last-child { padding: 0 3px; }
.menus { display: flex; gap: 31px; font-size: 13px; padding: 0 21px; }
.menus a { height: 27px; line-height: 28px; }
.menus .context { color: #0a7d70; }
.menus .current { color: #0a7d70; font-weight: bold; border-bottom: 2px solid #0a7d70; }
.sep.last { margin: 0 11px 0 7px; }
.cloud { margin-left: auto; margin-right: 12px; }
.share { height: 24px; width: 56px; justify-content: center; gap: 4px; background: #009683; color: #fff; border-radius: 4px; }

/* ribbon */
.ribbon { margin: 4px 12px 0 13px; height: 75px; display: flex; padding: 3px 0 5px; background: #fff; border: 1px solid #d8d6d4; border-radius: 8px; box-shadow: 0 1px 3px #0003; position: relative; z-index: 1; }
.group { display: flex; align-items: center; border-right: 1px solid #d9d9d9; position: relative; }
.group.g-size { border: 0; }
.g-format { width: 66px; justify-content: center; }
.g-insert { padding: 0 24px 0 12px; gap: 13px; width: 178px; }
.g-style { padding: 0 13px 0 8px; gap: 12px; }
.g-arrange { padding: 0 17px 0 12px; gap: 14px; }
.g-size { padding: 0 0 0 8px; }
.pick { margin-left: 3px; }
.big { flex-direction: column; gap: 7px; }
.big span { display: flex; align-items: center; gap: 4px; }
.small { gap: 4px; height: 18px; }
.small svg:last-child { margin-left: 2px; }
.stack { display: flex; flex-direction: column; gap: 10px; }
.off { color: #aaa; }
.gallery { width: 225px; height: 50px; border: 1px solid #c4c4c4; border-radius: 6px; display: flex; align-items: center; padding: 0 2px 0 9px; gap: 18px; }
.swatch { width: 53px; height: 25px; justify-content: center; border-radius: 4px; background: #4874cb; color: #fff; }
.swatch.outline { background: #fff; color: #111; border: 1px solid #4874cb; }
.swatch.shadow { box-shadow: 0 4px 6px #4874cb99; }
.more { margin-left: -5px; }
.launcher { position: absolute; right: 2px; bottom: -3px; color: #666; }
.sizes { gap: 4px; }
.sizes label { display: flex; align-items: center; gap: 6px; }
.spin { width: 101px; height: 24px; border: 1px solid #c4c4c4; border-radius: 4px; display: flex; align-items: center; padding: 0 5px 0 8px; }
.spin input { border: 0; outline: 0; padding: 0; flex: 1; min-width: 0; background: none; }
.arrows { display: flex; flex-direction: column; gap: 3px; color: #333; }
.arrows .up { transform: rotate(180deg); }
.g-size .launcher { right: -4px; }

/* workspace */
.workspace { flex: 1; display: flex; min-height: 0; }
.book { flex: 1; min-width: 0; display: flex; flex-direction: column; }
.formula-row { display: flex; gap: 10px; padding: 8px 13px 6px 12px; background: linear-gradient(#eeeeee00, #eee); }
.namebox, .formula { height: 28px; background: #fff; border: 1px solid #d0cecb; border-radius: 5px; }
.namebox { width: 163px; padding: 0 6px; color: #222; }
.namebox span { flex: 1; text-align: center; padding-right: 6px; }
.formula { flex: 1; display: flex; align-items: center; padding-left: 22px; font-size: 14px; color: #666; }
.fx { font: italic 16px "Liberation Serif", serif; color: #aaa; margin: 0 13px 0 17px; }
.formula i { width: 1px; height: 16px; background: #ccc; margin-right: 7px; }
.formula input { border: 0; outline: 0; padding: 0 0 2px; flex: 1; background: none; }
.sheet { flex: 1; min-height: 0; display: flex; }
.grid { flex: 1; min-width: 0; position: relative; overflow: hidden; background: #fff; }

table { border-collapse: separate; border-spacing: 0; table-layout: fixed; width: 1665px; }
col { width: 115px; }
.c-head { width: 55px; }
th { height: 29px; padding: 0 0 6px; background: #eee; color: #555; font: 20px/22px Lato, sans-serif; border: 0 solid #dcdcdc; border-width: 0 1px 1px 0; text-align: center; }
thead th { height: 31px; padding: 0; }
thead th.corner { padding-left: 24px; border-width: 0; }
td { height: 29px; padding: 4px 4px 0; border: 0 solid #e2e2e2; border-width: 0 1px 1px 0; font: 300 23px/24px "Liberation Serif", "Noto Sans CJK SC", serif; color: #111; white-space: nowrap; }
.series { background: #f8eaea; }
.cat { background: #f2ecf8; border-color: #dcd8e3; }
.val { background: #e9edf9; border-color: #d4d9e6; text-align: right; }
.ranges { position: absolute; left: 165px; top: 25px; }

/* floating chart */
.chart { position: absolute; left: 430px; top: 182px; width: 814px; height: 468px; margin: 0; background: #fff; padding-top: 13px; color: #444; }
.chart figcaption { font: 500 30px/40px "Noto Sans CJK SC", sans-serif; text-align: center; }
.legend { list-style: none; margin: 18px auto 0; padding: 0 0 0 16px; width: 518px; display: grid; grid-template-columns: repeat(6, 1fr); font: 300 19px/29px "Noto Sans CJK SC", sans-serif; color: #555; }
.legend li { display: flex; align-items: center; gap: 7px; white-space: nowrap; }
.legend li::before { content: ""; width: 11px; height: 11px; flex: none; background: var(--key); }
.k1 { --key: #5380dc; } .k2 { --key: #ff8f37; } .k3 { --key: #ffc90d; }
.k4 { --key: #82cc4b; } .k5 { --key: #39cfc2; } .k6 { --key: #f5566a; }
.k7 { --key: #2c4c8a; } .k8 { --key: #a85513; } .k9 { --key: #9a7a08; }
.k10 { --key: #4f7b30; } .k11 { --key: #237a72; } .k12 { --key: #ab1f2e; }
.plot { position: absolute; left: -8px; top: -8px; }
.labels { font-size: 18px; fill: #444; text-anchor: middle; }

.chart-tools { position: absolute; left: 1258px; top: 187px; display: flex; flex-direction: column; gap: 8px; }
.chart-tools button { width: 28px; height: 28px; justify-content: center; background: #fff; border-radius: 5px; border: 1px solid #ddd; box-shadow: 0 0 5px #0002; }
.chart-tools .on { background: #e6e6e6; }
.popup { position: absolute; background: #fff; border: 1px solid #d8d8d8; border-radius: 8px; box-shadow: 0 3px 14px #0002; color: #222c3a; }
.elements { left: 1293px; top: 187px; width: 149px; height: 127px; padding: 16px 22px; }
.popup-tabs { display: flex; height: 24px; margin-bottom: 6px; margin-left: -2px; width: 110px; }
.popup-tabs .plain { height: 24px; padding: 0 5px 0 0; }
.popup-tabs .plain + .plain { padding: 0 0 0 5px; border-left: 1px solid #ddd; }
.popup-tabs .sel { color: #2463c8; }
.elements label { display: flex; align-items: center; gap: 5px; width: 81px; height: 21px; padding-left: 5px; }
.elements .hover { background: #b8bcc6; }
.elements input { appearance: none; margin: 0; width: 13px; height: 13px; border: 1px solid #b4b7be; border-radius: 2px; background: #fff; display: flex; justify-content: center; }
.elements input::before { content: ""; width: 7px; height: 4px; margin-top: 2px; border: solid #222c3a; border-width: 0 0 2px 2px; transform: rotate(-45deg); }
.elements .hover input { background: none; border-color: #222c3a; }
.flyout { position: absolute; right: 20px; top: 72px; color: #777; }
.positions { left: 1430px; top: 256px; width: 105px; height: 149px; padding: 18px 20px; }
.positions button { height: 21px; }
.pointers { position: absolute; left: 1070px; top: 259px; filter: drop-shadow(1px 3px 2px #0007); }

.vscroll { width: 16px; margin-top: 31px; box-shadow: 0 -31px #eee; display: flex; flex-direction: column; align-items: center; padding: 7px 0 8px; gap: 8px; }
.vscroll .split { width: 8px; height: 2px; background: #b0adab; }
.thumb { background: #cfcbc9; border-radius: 4px; }
.vscroll .thumb { width: 8px; flex: 1; margin-bottom: 38px; }
.tri { width: 0; height: 0; border: 3px solid transparent; }
.tri.up { border-bottom: 5px solid #777; border-top: 0; }
.tri.down { border-top: 5px solid #777; border-bottom: 0; }
.tri.left { border-right: 5px solid #777; border-left: 0; }
.tri.right { border-left: 5px solid #777; border-right: 0; }

.sheet-tabs { height: 27px; border-top: 1px solid #d6d0ce; display: flex; padding: 0 19px 0 14px; }
.tab-nav { display: flex; align-items: center; gap: 12px; margin-right: 12px; }
.tab-nav svg { fill: none; stroke: #999; stroke-width: 1.600; }
.sheet-tab { width: 81px; height: 25px; margin-top: -1px; justify-content: center; background: #fff; border: 1px solid #ddd; border-top: 0; border-radius: 0 0 5px 5px; font: bold 17px/24px "Noto Sans", sans-serif; color: #0a7d70; }
.add { margin-left: 7px; }
.hscroll { margin-left: auto; width: 638px; display: flex; align-items: center; }
.hscroll .split { width: 2px; height: 8px; background: #b0adab; }
.hscroll .tri.left { margin: 0 9px 0 14px; }
.hscroll .track { flex: 1; padding-right: 76px; }
.hscroll .thumb { height: 8px; }
.hscroll .tri.right { margin: 0 13px 0 0; }

/* properties panel */
.panel { width: 262px; border-left: 1px solid #ccc8c6; padding: 16px 17px 16px 16px; }
.panel-head { display: flex; align-items: center; font-size: 14px; height: 20px; gap: 7px; padding: 0 6px 0 4px; }
.pin { margin-left: auto; margin-right: 8px; }
.segments { margin-top: 13px; height: 31px; display: flex; background: #dbd7d4; border-radius: 6px; padding: 2px; color: #555; }
.segments button { flex: 1; justify-content: center; gap: 8px; border-radius: 5px; }
.segments .sel { background: #fff; color: #222c3a; font-weight: bold; }
.panel-tabs { display: flex; gap: 16px; margin-top: 16px; padding-left: 1px; }
.panel-tabs a { height: 24px; line-height: 20px; }
.panel-tabs .sel { font-weight: bold; color: #0a7d70; }
.panel-tabs .sel::after { content: ""; display: block; width: 24px; height: 2px; margin: 0 auto; background: #0a7d70; }
.sections { margin-top: 15px; display: flex; flex-direction: column; gap: 38px; padding-left: 3px; }
.sections button { height: 20px; gap: 6px; font-weight: bold; }
.sections svg { color: #777; }

.sidebar { width: 55px; border-left: 1px solid #ccc8c6; display: flex; flex-direction: column; align-items: center; gap: 8px; padding: 9px 1px 0 0; }
.sidebar button { width: 32px; height: 32px; justify-content: center; border-radius: 5px; }
.sidebar .short { margin-bottom: -8px; }
.sidebar .on { background: #d3cfcc; }

/* status bar */
.status { height: 24px; border-top: 1px solid #ccc6c4; display: flex; align-items: center; padding: 0 17px 1px; }
.status-tools { margin-left: auto; display: flex; align-items: center; height: 22px; }
.eye { margin-right: 19px; }
.cross { gap: 6px; margin-right: 13px; }
.view { width: 24px; height: 23px; justify-content: center; margin-right: 8px; border-radius: 4px; }
.view.on { background: #d3cccb; margin-left: 9px; }
.zoom { margin: 0 20px 0 14px; gap: 10px; font-size: 12px; }
.zoom-range { appearance: none; width: 112px; height: 14px; margin: 0 9px 0 15px; background: linear-gradient(90deg, #1f5fc4 56%, #b5afae 56%) center / 100% 2px no-repeat; }
.zoom-range::-webkit-slider-thumb { appearance: none; width: 11px; height: 11px; border-radius: 50%; background: #777; border: 3px solid #fff; box-shadow: 0 0 2px #0006; }
.full { margin-left: 20px; }

.ime { position: fixed; right: 3px; bottom: 81px; width: 61px; height: 26px; display: flex; align-items: center; justify-content: center; gap: 4px; font-size: 13px; background: #fff; border-radius: 5px; box-shadow: 0 0 4px #000a; }
.brand { position: fixed; right: 11px; bottom: 8px; display: flex; opacity: .75; pointer-events: none; }
.brand div { display: flex; flex-direction: column; }
.brand b { font-size: 21px; line-height: 22px; color: #3f86cf; }
.brand span { font: 18px/20px "Liberation Sans", sans-serif; color: #4cb86b; }
```
